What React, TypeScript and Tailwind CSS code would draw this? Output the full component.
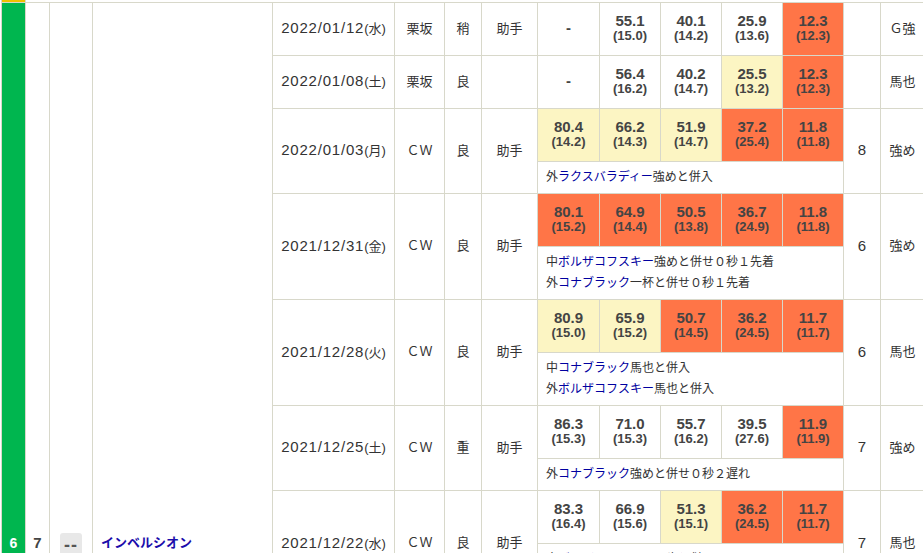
import React from "react";

const ORANGE = "bg-[#ff7547]";
const CREAM = "bg-[#fcf5c3]";

type Lap = { t: string; s: string; c?: "o" | "y" };
type Row = {
  date: string;
  day: string;
  course: string;
  cond: string;
  rider: string;
  laps: Lap[];
  notes?: React.ReactNode[];
  num?: string;
  str: string;
};

const H = ({ children }: { children: React.ReactNode }) => (
  <span className="text-[#0000a0]">{children}</span>
);

const rows: Row[] = [
  {
    date: "2022/01/12", day: "(水)", course: "栗坂", cond: "稍", rider: "助手", str: "Ｇ強",
    laps: [
      { t: "-", s: "" },
      { t: "55.1", s: "(15.0)" },
      { t: "40.1", s: "(14.2)" },
      { t: "25.9", s: "(13.6)" },
      { t: "12.3", s: "(12.3)", c: "o" },
    ],
  },
  {
    date: "2022/01/08", day: "(土)", course: "栗坂", cond: "良", rider: "", str: "馬也",
    laps: [
      { t: "-", s: "" },
      { t: "56.4", s: "(16.2)" },
      { t: "40.2", s: "(14.7)" },
      { t: "25.5", s: "(13.2)", c: "y" },
      { t: "12.3", s: "(12.3)", c: "o" },
    ],
  },
  {
    date: "2022/01/03", day: "(月)", course: "ＣＷ", cond: "良", rider: "助手", num: "8", str: "強め",
    laps: [
      { t: "80.4", s: "(14.2)", c: "y" },
      { t: "66.2", s: "(14.3)", c: "y" },
      { t: "51.9", s: "(14.7)", c: "y" },
      { t: "37.2", s: "(25.4)", c: "o" },
      { t: "11.8", s: "(11.8)", c: "o" },
    ],
    notes: [<>外<H>ラクスバラディー</H>強めと併入</>],
  },
  {
    date: "2021/12/31", day: "(金)", course: "ＣＷ", cond: "良", rider: "助手", num: "6", str: "強め",
    laps: [
      { t: "80.1", s: "(15.2)", c: "o" },
      { t: "64.9", s: "(14.4)", c: "o" },
      { t: "50.5", s: "(13.8)", c: "o" },
      { t: "36.7", s: "(24.9)", c: "o" },
      { t: "11.8", s: "(11.8)", c: "o" },
    ],
    notes: [
      <>中<H>ボルザコフスキー</H>強めと併せ０秒１先着</>,
      <>外<H>コナブラック</H>一杯と併せ０秒１先着</>,
    ],
  },
  {
    date: "2021/12/28", day: "(火)", course: "ＣＷ", cond: "良", rider: "助手", num: "6", str: "馬也",
    laps: [
      { t: "80.9", s: "(15.0)", c: "y" },
      { t: "65.9", s: "(15.2)", c: "y" },
      { t: "50.7", s: "(14.5)", c: "o" },
      { t: "36.2", s: "(24.5)", c: "o" },
      { t: "11.7", s: "(11.7)", c: "o" },
    ],
    notes: [
      <>中<H>コナブラック</H>馬也と併入</>,
      <>外<H>ボルザコフスキー</H>馬也と併入</>,
    ],
  },
  {
    date: "2021/12/25", day: "(土)", course: "ＣＷ", cond: "重", rider: "助手", num: "7", str: "強め",
    laps: [
      { t: "86.3", s: "(15.3)" },
      { t: "71.0", s: "(15.3)" },
      { t: "55.7", s: "(16.2)" },
      { t: "39.5", s: "(27.6)" },
      { t: "11.9", s: "(11.9)", c: "o" },
    ],
    notes: [<>外<H>コナブラック</H>強めと併せ０秒２遅れ</>],
  },
  {
    date: "2021/12/22", day: "(水)", course: "ＣＷ", cond: "良", rider: "助手", num: "7", str: "馬也",
    laps: [
      { t: "83.3", s: "(16.4)" },
      { t: "66.9", s: "(15.6)" },
      { t: "51.3", s: "(15.1)", c: "y" },
      { t: "36.2", s: "(24.5)", c: "o" },
      { t: "11.7", s: "(11.7)", c: "o" },
    ],
    notes: [
      <>中<H>ボルザコフスキー</H>馬也と併入</>,
      <>外<H>コナブラック</H>馬也と併入</>,
    ],
  },
];

const totalRows = rows.reduce((n, r) => n + (r.notes ? 2 : 1), 0);
const line = "border border-[#d8d8ca]";
const center = `${line} text-center align-middle`;

function LapCell({ lap }: { lap: Lap }) {
  const bg = lap.c === "o" ? ORANGE : lap.c === "y" ? CREAM : "";
  return (
    <td className={`${center} ${bg} pb-[2px] font-bold text-[#444]`}>
      <div className="text-[15px] leading-[15px]">{lap.t}</div>
      {lap.s && <div className="text-[13px] leading-[15px]">{lap.s}</div>}
    </td>
  );
}

export default function App() {
  return (
    <div className="h-[553px] w-[923px] overflow-hidden bg-white pl-[1px] font-['Liberation_Sans','Noto_Sans_CJK_JP',sans-serif] text-[#333]">
      <table className="w-[923px] table-fixed border-collapse text-[13px]">
        <colgroup>
          <col className="w-[24px]" />
          <col className="w-[24px]" />
          <col className="w-[43px]" />
          <col className="w-[180px]" />
          <col className="w-[122px]" />
          <col className="w-[50px]" />
          <col className="w-[37px]" />
          <col className="w-[56px]" />
          <col className="w-[62px]" />
          <col className="w-[61px]" />
          <col className="w-[61px]" />
          <col className="w-[61px]" />
          <col className="w-[61px]" />
          <col className="w-[37px]" />
          <col className="w-[44px]" />
        </colgroup>
        <tbody>
          <tr className="h-[2px]">
            <td className="border-x border-[#d8d8ca] bg-[#f0c000] p-0" />
            <td colSpan={14} className="border-x border-[#d8d8ca] p-0" />
          </tr>
          {rows.map((r, i) => {
            const span = r.notes ? 2 : undefined;
            return (
              <React.Fragment key={r.date}>
                <tr className="h-[53px]">
                  {i === 0 && (
                    <>
                      <td rowSpan={totalRows} className={`${line} bg-[#00b64f] pt-[530px] text-center align-top text-[14px] leading-[20px] font-bold text-white`}>6</td>
                      <td rowSpan={totalRows} className={`${line} pt-[530px] text-center align-top text-[15px] leading-[20px] font-bold text-[#444]`}>7</td>
                      <td rowSpan={totalRows} className={`${line} pt-[530px] text-center align-top`}>
                        <span className="inline-block h-[24px] w-[22px] rounded-[3px] bg-[#e8e8e8] text-[18px] leading-[24px] font-bold tracking-[1px] text-[#555]">--</span>
                      </td>
                      <td rowSpan={totalRows} className={`${line} pt-[530px] pl-[8px] align-top text-[13px] leading-[20px] font-bold text-[#1a0dab]`}>インベルシオン</td>
                    </>
                  )}
                  <td rowSpan={span} className={`${center} whitespace-nowrap`}>
                    <span className="text-[15px] tracking-[0.8px]">{r.date}</span>
                    <span className="text-[13px]">{r.day}</span>
                  </td>
                  <td rowSpan={span} className={center}>{r.course}</td>
                  <td rowSpan={span} className={center}>{r.cond}</td>
                  <td rowSpan={span} className={center}>{r.rider}</td>
                  {r.laps.map((l, j) => (
                    <LapCell key={j} lap={l} />
                  ))}
                  <td rowSpan={span} className={`${center} text-[15px]`}>{r.num}</td>
                  <td rowSpan={span} className={center}>{r.str}</td>
                </tr>
                {r.notes && (
                  <tr>
                    <td colSpan={5} className={`${line} py-[5px] pl-[8px] text-[12px] leading-[21px]`}>
                      {r.notes.map((n, k) => (
                        <div key={k}>{n}</div>
                      ))}
                    </td>
                  </tr>
                )}
              </React.Fragment>
            );
          })}
        </tbody>
      </table>
    </div>
  );
}
